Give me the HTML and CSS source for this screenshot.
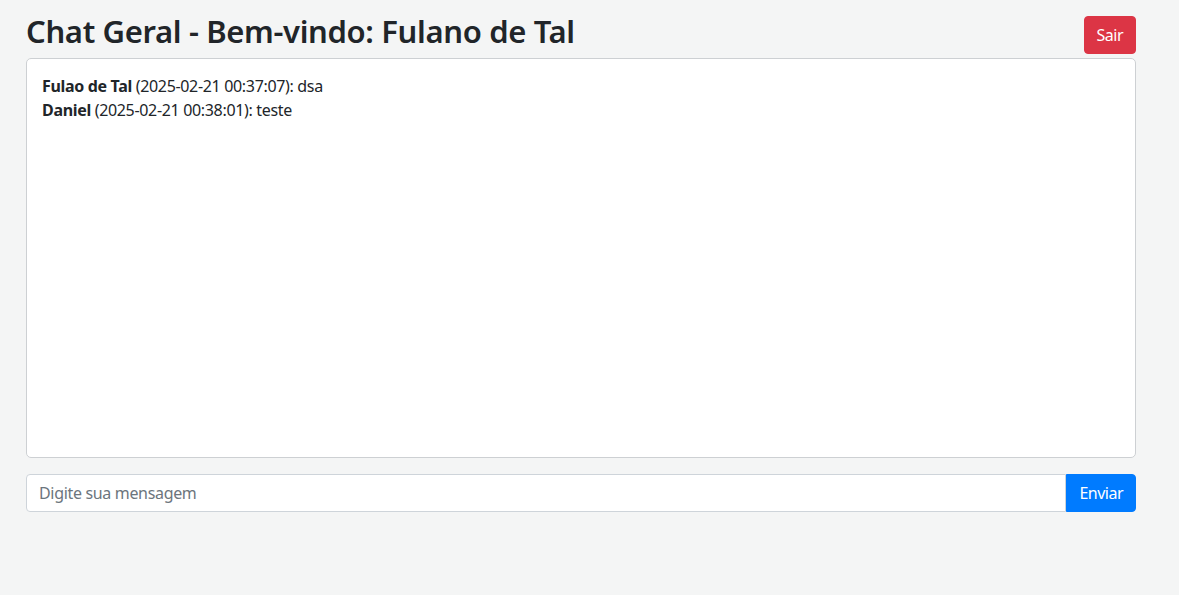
FILE: index.html
```html
<!DOCTYPE html>
<html lang="pt-BR">
<head>
<meta charset="utf-8">
<title>Chat Geral</title>
<link rel="stylesheet" href="styles.css">
</head>
<body>
<div class="container">
  <div class="header">
    <h2 class="title">Chat Geral - Bem-vindo: Fulano de Tal</h2>
    <button class="btn btn-danger" type="button">Sair</button>
  </div>
  <div class="chat-box">
    <div class="msg"><strong>Fulao de Tal</strong> (2025-02-21 00:37:07): dsa</div>
    <div class="msg"><strong>Daniel</strong> (2025-02-21 00:38:01): teste</div>
  </div>
  <form class="input-group" onsubmit="return false">
    <input class="form-control" type="text" placeholder="Digite sua mensagem">
    <button class="btn btn-primary" type="submit">Enviar</button>
  </form>
</div>
</body>
</html>
```
FILE: styles.css
```css
* { box-sizing: border-box; }
html, body { margin: 0; }
body {
  background: #f4f5f5;
  color: #212529;
  font-family: "Noto Sans", "Open Sans", sans-serif;
  font-size: 16px;
  line-height: 1.5;
  letter-spacing: -0.33px;
}
.container {
  width: 1110px;
  margin-left: 26px;
  padding-top: 12px;
}
.header {
  display: flex;
  justify-content: space-between;
  align-items: center;
}
.title {
  margin: 0 0 8px 0;
  font-size: 31px;
  font-weight: 600;
  line-height: 38.4px;
  letter-spacing: -0.35px;
}
.btn {
  font-family: inherit;
  font-size: 16px;
  line-height: 24px;
  letter-spacing: -0.5px;
  padding: 6px 12px;
  border: 1px solid transparent;
  border-radius: 4px;
  color: #fff;
  cursor: pointer;
}
.btn-danger { background: #dc3545; border-color: #dc3545; }
.btn-primary { background: #007bff; border-color: #007bff; }
.chat-box {
  height: 400px;
  background: #fff;
  border: 1px solid #cdd0d3;
  border-radius: 5px;
  padding: 15px;
  margin-bottom: 16px;
  overflow-y: auto;
}
.msg strong { font-weight: 700; }
.input-group {
  display: flex;
  margin: 0;
}
.form-control {
  flex: 1;
  height: 38px;
  padding: 6px 12px;
  font-family: inherit;
  font-size: 16px;
  letter-spacing: -0.33px;
  color: #495057;
  background: #fff;
  border: 1px solid #ced4da;
  border-radius: 4px 0 0 4px;
  outline: none;
}
.form-control::placeholder { color: #6c757d; }
.input-group .btn { border-radius: 0 4px 4px 0; }
```
